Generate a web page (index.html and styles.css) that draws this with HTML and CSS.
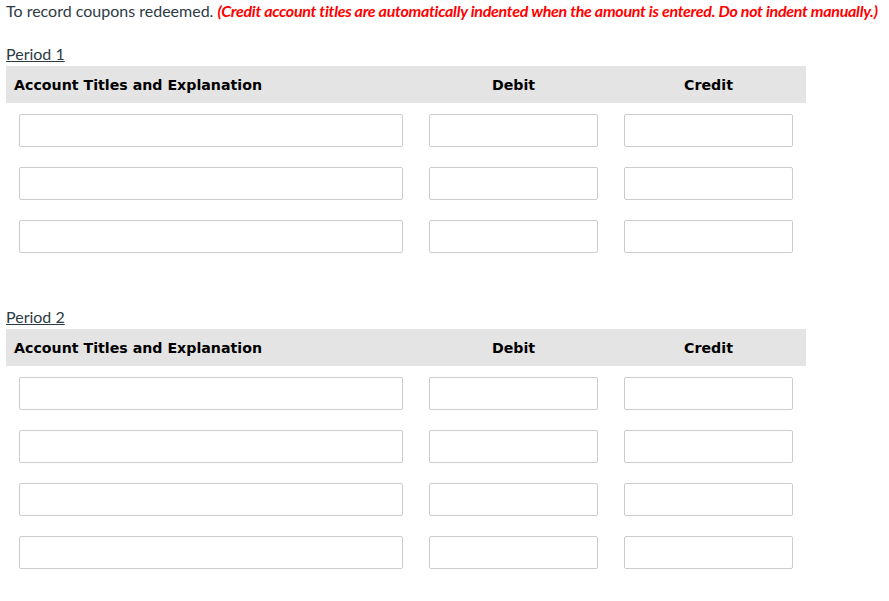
FILE: index.html
```html
<!DOCTYPE html>
<html lang="en">

<head>
    <meta charset="UTF-8">
    <meta name="viewport" content="width=device-width, initial-scale=1.0">
    <title>Journal Entries</title>
    <link rel="stylesheet" href="styles.css">
</head>

<body>
    <p class="intro">To record coupons redeemed. <em class="note">(Credit account titles are automatically indented when the amount is entered. Do not indent manually.)</em></p>

    <div class="period">
        <div class="period-title"><u>Period 1</u></div>
        <div class="journal">
            <div class="journal-head">
                <div class="cell title">Account Titles and Explanation</div>
                <div class="cell amount">Debit</div>
                <div class="cell amount">Credit</div>
            </div>
            <div class="journal-row">
                <div class="cell"><input type="text"></div>
                <div class="cell"><input type="text"></div>
                <div class="cell"><input type="text"></div>
            </div>
            <div class="journal-row">
                <div class="cell"><input type="text"></div>
                <div class="cell"><input type="text"></div>
                <div class="cell"><input type="text"></div>
            </div>
            <div class="journal-row">
                <div class="cell"><input type="text"></div>
                <div class="cell"><input type="text"></div>
                <div class="cell"><input type="text"></div>
            </div>
        </div>
    </div>

    <div class="period">
        <div class="period-title"><u>Period 2</u></div>
        <div class="journal">
            <div class="journal-head">
                <div class="cell title">Account Titles and Explanation</div>
                <div class="cell amount">Debit</div>
                <div class="cell amount">Credit</div>
            </div>
            <div class="journal-row">
                <div class="cell"><input type="text"></div>
                <div class="cell"><input type="text"></div>
                <div class="cell"><input type="text"></div>
            </div>
            <div class="journal-row">
                <div class="cell"><input type="text"></div>
                <div class="cell"><input type="text"></div>
                <div class="cell"><input type="text"></div>
            </div>
            <div class="journal-row">
                <div class="cell"><input type="text"></div>
                <div class="cell"><input type="text"></div>
                <div class="cell"><input type="text"></div>
            </div>
            <div class="journal-row">
                <div class="cell"><input type="text"></div>
                <div class="cell"><input type="text"></div>
                <div class="cell"><input type="text"></div>
            </div>
        </div>
    </div>
</body>

</html>
```

FILE: styles.css
```css
body {
    margin: 0;
    padding: 0 6px;
    font-family: Lato, "Open Sans", sans-serif;
    color: #2d3b45;
    background: #fff;
}

.intro {
    margin: 0;
    font-size: 16px;
    line-height: 22px;
}

.note {
    color: #f00;
    font-weight: bold;
    letter-spacing: -0.28px;
}

.period-title {
    font-size: 16px;
    line-height: 20px;
    margin-top: 22px;
    margin-bottom: 2px;
}

.period + .period .period-title {
    margin-top: 44px;
}

.journal {
    width: 800px;
}

.journal-head,
.journal-row {
    display: grid;
    grid-template-columns: 410px 195px 195px;
}

.journal-head {
    background: #e4e4e4;
    height: 37px;
    align-items: center;
    margin-bottom: 1px;
    font-family: "DejaVu Sans", Verdana, sans-serif;
    font-weight: bold;
    font-size: 14.2px;
    color: #000;
}

.journal-head .title {
    padding-left: 8px;
}

.journal-head .amount {
    text-align: center;
}

.journal-row {
    padding: 10px 0;
}

.journal-row .cell {
    padding: 0 13px;
}

input[type="text"] {
    display: block;
    box-sizing: border-box;
    width: 100%;
    height: 33px;
    margin: 0;
    border: 1px solid #cccccc;
    border-radius: 2px;
    background: #fff;
    font-family: inherit;
    font-size: 14px;
}
```
